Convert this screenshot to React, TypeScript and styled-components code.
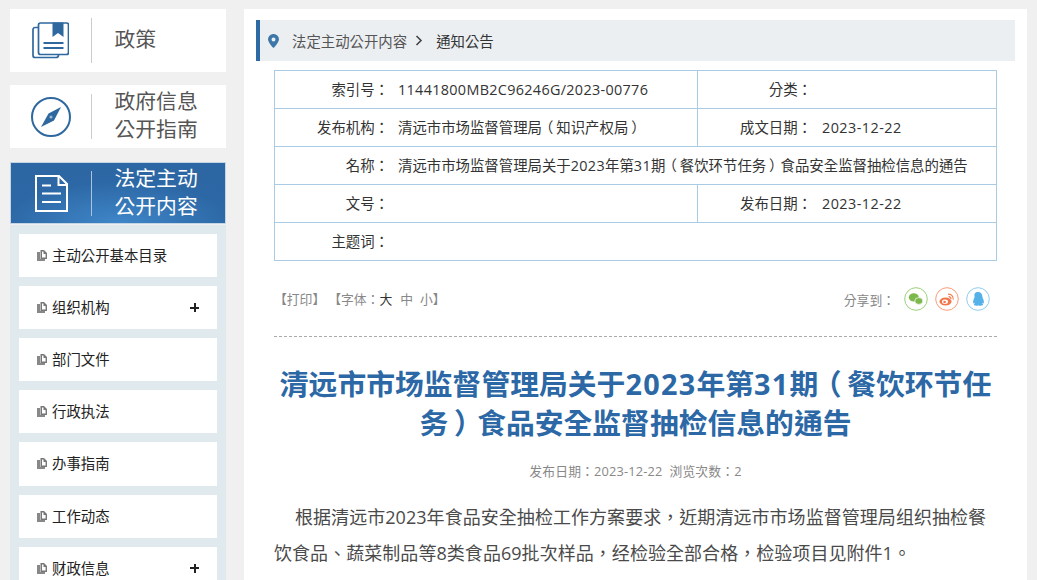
import React from "react";
import styled, { createGlobalStyle } from "styled-components";

const Global = createGlobalStyle`
  html, body { margin: 0; padding: 0; height: 580px; overflow: hidden; background: #f0f0f0; }
  body { font-family: "Open Sans", "Noto Sans CJK TC", sans-serif; }
  * { box-sizing: border-box; }
`;

const Page = styled.div`
  display: flex;
  align-items: flex-start;
  height: 580px;
  overflow: hidden;
  padding: 9px 10px 0;
  gap: 18px;
`;
const Side = styled.aside`
  width: 216px;
  flex: none;
  display: flex;
  flex-direction: column;
`;
const Card = styled.div<{ $active?: boolean; $gap?: number }>`
  height: ${(p) => (p.$active ? 62 : 63)}px;
  margin-bottom: ${(p) => p.$gap ?? 0}px;
  display: flex;
  align-items: center;
  background: ${(p) =>
    p.$active ? "radial-gradient(ellipse 70% 90% at 50% 100%, #3f86c8 0%, #2d68a6 75%, #2c66a3 100%)" : "#fff"};
  color: ${(p) => (p.$active ? "#fff" : "#555")};
  border: ${(p) => (p.$active ? "1px solid #c3d5e3" : "none")};
`;
const CardIcon = styled.div<{ $active?: boolean }>`
  width: ${(p) => (p.$active ? 80 : 81)}px;
  flex: none;
  display: flex;
  justify-content: center;
  align-items: center;
`;
const Rule = styled.div<{ $active?: boolean }>`
  width: 1px;
  height: 45px;
  flex: none;
  background: ${(p) => (p.$active ? "#a9c4dc" : "#ccc")};
`;
const CardTitle = styled.div`
  margin: -3px 0 0 22.5px;
  font-size: 20.8px;
  line-height: 28px;
  width: 90px;
`;
const Nav = styled.nav`
  background: #e0e9ee;
  margin-top: 1px;
  padding: 9px 9px 0;
  display: flex;
  flex-direction: column;
  gap: 9px;
  height: 400px;
`;
const NavItem = styled.div`
  height: 43.11px;
  flex: none;
  background: #fff;
  display: flex;
  align-items: center;
  padding: 0 18px 0 17px;
  font-size: 14.4px;
  line-height: 43px;
  color: #222;
`;
const NavLabel = styled.span`
  margin-left: 4px;
  flex: 1;
`;
const Plus = styled.span`
  width: 9px;
  height: 9px;
  position: relative;
  &::before, &::after { content: ""; position: absolute; background: #222; }
  &::before { left: 0; right: 0; top: 3.5px; height: 2px; }
  &::after { top: 0; bottom: 0; left: 3.5px; width: 2px; }
`;
const Main = styled.main`
  flex: 1;
  background: #fff;
  height: 571px;
  padding: 11px 12px 0;
`;
const Crumb = styled.div`
  height: 41px;
  background: #eceff2;
  border-left: 4px solid #2d6aa4;
  display: flex;
  align-items: center;
  padding-left: 8px;
  font-size: 14.4px;
  color: #555;
`;
const CrumbText = styled.span<{ $current?: boolean }>`
  color: ${(p) => (p.$current ? "#333" : "#555")};
  margin-left: 13px;
`;
const CrumbArrow = styled.svg`
  margin-left: 8px;
`;
const Body = styled.div`
  margin: 9px -6px 0 18px;
  width: 723px;
`;
const Meta = styled.div`
  border: 1px solid #a9cbe4;
  border-bottom: none;
  font-size: 14.4px;
  color: #333;
`;
const MetaRow = styled.div`
  display: flex;
  height: 38px;
  border-bottom: 1px solid #a9cbe4;
`;
const MetaKey = styled.div<{ $w: number }>`
  width: ${(p) => p.$w}px;
  flex: none;
  line-height: 37px;
  text-align: right;
  white-space: nowrap;
`;
const MetaVal = styled.div<{ $w?: number; $divided?: boolean }>`
  padding-left: ${(p) => (p.$w ? 9 : 10)}px;
  line-height: 37px;
  white-space: nowrap;
  width: ${(p) => (p.$w ? `${p.$w}px` : "auto")};
  flex: ${(p) => (p.$w ? "none" : 1)};
  border-right: ${(p) => (p.$divided ? "1px solid #a9cbe4" : "none")};
  height: 37px;
`;
const Num = styled.span<{ $ls: number }>`
  letter-spacing: ${(p) => p.$ls}px;
`;
const Open = styled.span`
  margin: 0 0.2em 0 -0.2em;
`;
const Close = styled.span`
  margin: 0 -0.2em 0 0.2em;
`;
const Tools = styled.div`
  height: 76px;
  border-bottom: 1px dashed #aaa;
  display: flex;
  align-items: flex-start;
  justify-content: space-between;
  padding-top: 26px;
  font-size: 12.8px;
  color: #888;
`;
const ToolLinks = styled.div`
  display: flex;
  line-height: 24px;
`;
const ToolDark = styled.span`
  color: #333;
`;
const Sep = styled.span<{ $w: number }>`
  display: inline-block;
  width: ${(p) => p.$w}px;
`;
const Share = styled.div`
  display: flex;
  align-items: center;
  height: 24px;
  padding-right: 7px;
  gap: 7px;
`;
const ShareLabel = styled.span`
  font-size: 12.8px;
  margin-right: 2px;
`;
const Title = styled.h1`
  margin: 27px 0 0;
  font-size: 28.8px;
  line-height: 39px;
  font-weight: 700;
  color: #2b68a5;
  text-align: center;
`;
const TitleLine = styled.div`
  white-space: nowrap;
`;
const Info = styled.div`
  margin-top: 17px;
  text-align: center;
  font-size: 12.8px;
  line-height: 24px;
  color: #888;
  letter-spacing: 0.16px;
`;
const Para = styled.p`
  margin: 16px 0 0;
  font-size: 18px;
  line-height: 36px;
  color: #4a4a4a;
  text-indent: 21px;
  letter-spacing: 0.05px;
`;

const DocIcon = () => (
  <svg width="37" height="37" viewBox="0 0 37 37" fill="none" stroke="#2f689f" strokeWidth="1.7">
    <path d="M6 5.500H3a2 2 0 0 0-2 2V33.500a2 2 0 0 0 2 2h21a2.500 2.500 0 0 0 2.500-2.500" />
    <rect x="6.500" y="1" width="30" height="31.500" rx="2" fill="#fff" />
    <path d="M20.500 0.500h11v14.500l-5.500-4-5.500 4z" fill="#2f689f" stroke="none" />
    <path d="M11.500 21h20M11.500 26h20" strokeWidth="1.800" />
  </svg>
);
const Compass = () => (
  <svg width="42" height="42" viewBox="0 0 42 42" fill="none">
    <circle cx="21" cy="21" r="19" stroke="#2f689f" strokeWidth="2" />
    <path d="M31 11 18.500 17.500 11 31l13-6.500z" fill="#2f689f" />
    <circle cx="21" cy="21" r="1.500" fill="#9db9d3" />
  </svg>
);
const FileIcon = () => (
  <svg width="33" height="37" viewBox="0 0 33 37" fill="none" stroke="#fff" strokeWidth="2">
    <path d="M1 1h23l8 8v27H1z" />
    <path d="M23.500 1v9H32" />
    <path d="M7 10.500h9M7 18.500h19M7 27h19" strokeWidth="2.200" />
  </svg>
);
const Bullet = () => (
  <svg width="12" height="13" viewBox="0 0 12 13">
    <path d="M1 3h3v7h5v2H1z" fill="#888" />
    <path d="M4.500 1H8l3 3v6H4.500zM6 2.500v6h3.600V5H7.500V2.500z" fill="#777" />
  </svg>
);
const Pin = () => (
  <svg width="11" height="14" viewBox="0 0 11 14">
    <path fillRule="evenodd" d="M5.500 0A5.300 5.300 0 0 0 0 5.200C0 8.600 5.500 14 5.500 14S11 8.600 11 5.200A5.300 5.300 0 0 0 5.500 0zm0 3.400a2 2 0 1 1 0 4 2 2 0 0 1 0-4z" fill="#3d76a8" />
  </svg>
);
const Chevron = () => (
  <CrumbArrow width="8" height="11" viewBox="0 0 8 11">
    <path d="M1.500 1 6 5.500 1.500 10" fill="none" stroke="#444" strokeWidth="1.600" />
  </CrumbArrow>
);
const Wechat = () => (
  <svg width="24" height="24" viewBox="0 0 24 24">
    <circle cx="12" cy="12" r="11.300" fill="#fff" stroke="#9ad07a" />
    <ellipse cx="9.800" cy="10.400" rx="5" ry="4.200" fill="#7cb84c" />
    <ellipse cx="14.800" cy="14" rx="4" ry="3.400" fill="#7cb84c" stroke="#fff" strokeWidth=".7" />
  </svg>
);
const Weibo = () => (
  <svg width="24" height="24" viewBox="0 0 24 24">
    <circle cx="12" cy="12" r="11.300" fill="#fff" stroke="#fb9b78" />
    <ellipse cx="10.500" cy="14.500" rx="6" ry="4" fill="#f2764a" />
    <ellipse cx="10" cy="14.800" rx="3" ry="2.200" fill="#fff" />
    <circle cx="9.600" cy="15" r="1.300" fill="#f2764a" />
    <path d="M13 7.200a4.600 4.600 0 0 1 5.200 5.400M13.600 9.600a2.200 2.200 0 0 1 2.400 2.600" fill="none" stroke="#f2764a" strokeWidth="1.100" />
  </svg>
);
const QQ = () => (
  <svg width="24" height="24" viewBox="0 0 24 24">
    <circle cx="12" cy="12" r="11.300" fill="#fff" stroke="#8fcdf0" />
    <path d="M12 5c2.800 0 4.200 2 4.400 4.800.1 1.200 1.400 3 1.500 5 .1 1.400-.5 2-.9 1.600l-.8-1c0 1 .4 1.700.9 2.200.3.500-1 1.200-2.600 1.200-.9 0-1.600-.3-2-.6-.4.300-1.100.6-2 .6-1.600 0-2.900-.7-2.600-1.200.5-.5.900-1.200.9-2.200l-.8 1c-.4.400-1-.2-.9-1.600.1-2 1.400-3.800 1.500-5C7.800 7 9.200 5 12 5z" fill="#55b2e8" />
  </svg>
);

const navItems = [
  { label: "主动公开基本目录" },
  { label: "组织机构", plus: true },
  { label: "部门文件" },
  { label: "行政执法" },
  { label: "办事指南" },
  { label: "工作动态" },
  { label: "财政信息", plus: true },
];

export default function App() {
  return (
    <>
      <Global />
      <Page>
        <Side>
          <Card $gap={13}>
            <CardIcon><DocIcon /></CardIcon>
            <Rule />
            <CardTitle>政策</CardTitle>
          </Card>
          <Card $gap={14}>
            <CardIcon><Compass /></CardIcon>
            <Rule />
            <CardTitle>政府信息公开指南</CardTitle>
          </Card>
          <Card $active>
            <CardIcon $active><FileIcon /></CardIcon>
            <Rule $active />
            <CardTitle>法定主动公开内容</CardTitle>
          </Card>
          <Nav>
            {navItems.map((n) => (
              <NavItem key={n.label}>
                <Bullet />
                <NavLabel>{n.label}</NavLabel>
                {n.plus && <Plus />}
              </NavItem>
            ))}
          </Nav>
        </Side>
        <Main>
          <Crumb>
            <Pin />
            <CrumbText>法定主动公开内容</CrumbText>
            <Chevron />
            <CrumbText $current>通知公告</CrumbText>
          </Crumb>
          <Body>
            <Meta>
              <MetaRow>
                <MetaKey $w={114}>索引号：</MetaKey>
                <MetaVal $w={309} $divided><Num $ls={0.32}>11441800MB2C96246G/2023-00776</Num></MetaVal>
                <MetaKey $w={114}>分类：</MetaKey>
                <MetaVal />
              </MetaRow>
              <MetaRow>
                <MetaKey $w={114}>发布机构：</MetaKey>
                <MetaVal $w={309} $divided>清远市市场监督管理局<Open>（</Open>知识产权局<Close>）</Close></MetaVal>
                <MetaKey $w={114}>成文日期：</MetaKey>
                <MetaVal><Num $ls={0.45}>2023-12-22</Num></MetaVal>
              </MetaRow>
              <MetaRow>
                <MetaKey $w={114}>名称：</MetaKey>
                <MetaVal $w={607}>清远市市场监督管理局关于<Num $ls={0.35}>2023</Num>年第<Num $ls={0.35}>31</Num>期<Open>（</Open>餐饮环节任务<Close>）</Close>食品安全监督抽检信息的通告</MetaVal>
              </MetaRow>
              <MetaRow>
                <MetaKey $w={114}>文号：</MetaKey>
                <MetaVal $w={309} $divided />
                <MetaKey $w={114}>发布日期：</MetaKey>
                <MetaVal><Num $ls={0.45}>2023-12-22</Num></MetaVal>
              </MetaRow>
              <MetaRow>
                <MetaKey $w={114}>主题词：</MetaKey>
                <MetaVal />
              </MetaRow>
            </Meta>
            <Tools>
              <ToolLinks>
                【打印】<Sep $w={3} />【字体：<ToolDark>大</ToolDark><Sep $w={8} />中<Sep $w={7} />小】
              </ToolLinks>
              <Share>
                <ShareLabel>分享到：</ShareLabel>
                <Wechat />
                <Weibo />
                <QQ />
              </Share>
            </Tools>
            <Title>
              <TitleLine>清远市市场监督管理局关于<Num $ls={1.3}>2023</Num>年第<Num $ls={1.3}>31</Num>期<Open>（</Open>餐饮环节任</TitleLine>
              <TitleLine>务<Close>）</Close>食品安全监督抽检信息的通告</TitleLine>
            </Title>
            <Info>发布日期：2023-12-22&nbsp;&nbsp;浏览次数：2</Info>
            <Para>根据清远市2023年食品安全抽检工作方案要求，近期清远市市场监督管理局组织抽检餐饮食品、蔬菜制品等8类食品69批次样品，经检验全部合格，检验项目见附件1。</Para>
          </Body>
        </Main>
      </Page>
    </>
  );
}
